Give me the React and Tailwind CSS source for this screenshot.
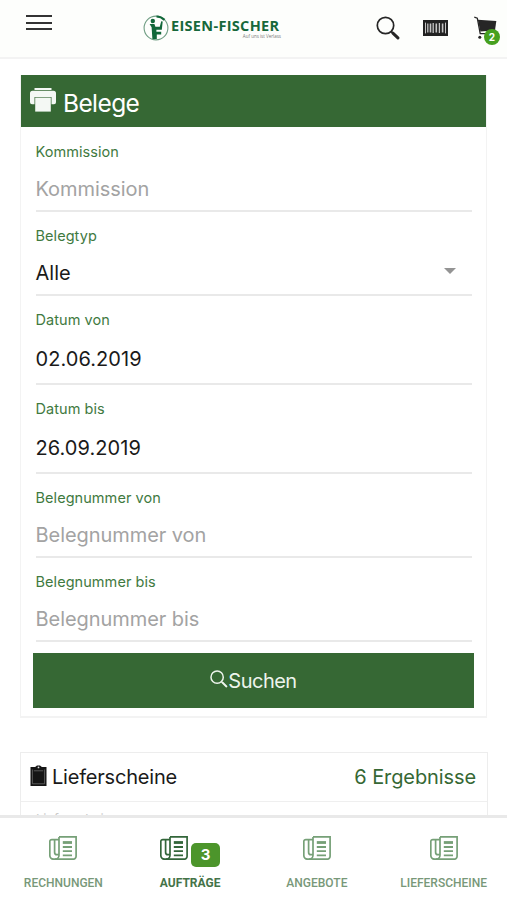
import clsx from 'clsx';

const fields = [
  { label: 'Kommission', placeholder: 'Kommission' },
  { label: 'Belegtyp', value: 'Alle', select: true },
  { label: 'Datum von', value: '02.06.2019', date: true },
  { label: 'Datum bis', value: '26.09.2019', date: true },
  { label: 'Belegnummer von', placeholder: 'Belegnummer von' },
  { label: 'Belegnummer bis', placeholder: 'Belegnummer bis' },
];

const tabs = [
  { label: 'RECHNUNGEN' },
  { label: 'AUFTRÄGE', badge: 3, active: true },
  { label: 'ANGEBOTE' },
  { label: 'LIEFERSCHEINE' },
];

const SearchIcon = ({ className, strokeWidth = 2, handle = 3 }) => (
  <svg viewBox="0 0 24 24" className={className} fill="none" stroke="currentColor" strokeWidth={strokeWidth}>
    <circle cx="9.5" cy="9.5" r="8.2" />
    <path d="M15.3 15.6l1.8 1.7" />
    <path d="M16.9 17.1l5 4.8" strokeWidth={handle} strokeLinecap="round" />
  </svg>
);

const BarcodeIcon = () => (
  <svg viewBox="0 0 25 16" className="h-4 w-[25px]">
    <path fill="#222" d="M0 0h25v16H0z" />
    <g fill="none" stroke="#c4c4c4" strokeWidth="1">
      <path d="M2.5 2.6v10.8M22.5 2.6v10.8" />
      <path d="M4.8 3.5v9M10.200 3v10M16.400 3v10" strokeWidth="1.300" />
      <path d="M7.500 3.500v9M13.300 3.500v9M19.600 3.500v9" strokeWidth="1.600" />
    </g>
  </svg>
);

const CartIcon = () => (
  <svg viewBox="0 0 24 24" className="h-6 w-6" fill="none" stroke="#262626">
    <path d="M.3 1.200l3 1 2.900 15.400h12" strokeWidth="1.300" />
    <path d="M3.800 3.700L22.300 5l-1.300 9.200-14.600 1.400z" fill="#262626" stroke="none" />
    <circle cx="5.800" cy="21.300" r="1.500" fill="#262626" stroke="none" />
  </svg>
);

const PaperIcon = () => (
  <svg viewBox="0 0 28 24" className="h-6 w-7" fill="none" stroke="currentColor" strokeWidth="1.700">
    <path d="M10 .9h17.100v19.300a3 3 0 0 1-3 3H4.700a3.900 3.900 0 0 1-3.900-3.900V5.600a2 2 0 0 1 2-2H10" />
    <path d="M10 .9v18.300a4 4 0 0 1-4 4" />
    <path d="M5.600 3.600v12.600c0 1.600 1 2.500 2.300 2.500H10" />
    <path d="M13.800 6.500h9.200" strokeWidth="2.800" />
    <path d="M13.800 11h9.200M13.800 15.200h9.200M13.800 19.300h9.200" strokeWidth="1.800" />
  </svg>
);

const Logo = () => (
  <div className="flex items-start">
    <svg viewBox="0 0 26 26" className="h-[26px] w-[26px]">
      <circle cx="13" cy="13" r="11.900" fill="none" stroke="#6f9d83" strokeWidth="1.100" />
      <path d="M13.500 1.500a11.900 11.900 0 0 1 8 3.400" fill="none" stroke="#12683a" strokeWidth="2.200" />
      <circle cx="9.800" cy="6" r="2.200" fill="#12683a" />
      <path
        d="M6.600 9h4.800l1 2.800h4.400l1.400-5.600 1.500.3-.9 8.300h-5.400v2h4.800v2.600h-4.400V24H9.400l-.8-11.800z"
        fill="#12683a"
      />
    </svg>
    <div className="ml-[2px] mt-[4px] flex w-[110px] flex-col items-end">
      <span className="w-full whitespace-nowrap font-['Open_Sans',sans-serif] text-[14.500px] font-bold leading-[14px] tracking-[0.320px] text-[#17683b]">
        EISEN-FISCHER
      </span>
      <span className="mt-px whitespace-nowrap font-['Open_Sans',sans-serif] text-[4.500px] leading-[5px] text-[#777]">
        Auf uns ist Verlass
      </span>
    </div>
  </div>
);

const Header = () => (
  <header className="flex h-[59px] shrink-0 items-start border-b-2 border-[#f3f3f3] bg-[#fdfefc]">
    <div className="ml-[26px] mt-[15px] flex w-[26px] flex-col gap-[4.500px]">
      <span className="h-[2px] bg-[#333]" />
      <span className="h-[2px] bg-[#333]" />
      <span className="h-[2px] bg-[#333]" />
    </div>
    <div className="ml-[91px] mt-[15px]">
      <Logo />
    </div>
    <div className="ml-auto flex items-start pr-[9px] text-[#262626]">
      <SearchIcon className="mt-[16px] h-6 w-6" strokeWidth={1.700} handle={3} />
      <div className="ml-[23px] mt-[20px]">
        <BarcodeIcon />
      </div>
      <div className="relative ml-[26px] mt-[16px]">
        <CartIcon />
        <span className="absolute left-[10px] top-[13px] flex h-4 w-4 items-center justify-center rounded-full bg-[#46a01f] text-[10px] font-bold text-white">
          2
        </span>
      </div>
    </div>
  </header>
);

const Field = ({ label, placeholder, value, select, date }) => (
  <div className={clsx('ml-[14.500px] mr-[14px] flex flex-col border-b-2 border-[#e9e9e9]', date ? 'h-[89px]' : 'h-[84px]')}>
    <label className="mt-[14px] text-[14.500px] leading-[20px] tracking-[0.060px] text-[#3f7a3f]">{label}</label>
    <div className={clsx('flex items-center justify-between leading-[28px]', date ? 'mt-[15px]' : 'mt-[13px]')}>
      <span
        className={clsx(
          'text-[20px]',
          value ? 'text-[#1a1a1a]' : 'tracking-[-0.060px] text-[#a3a3a3]',
          date && 'tracking-[0.060px]'
        )}
      >
        {value || placeholder}
      </span>
      {select && (
        <svg viewBox="0 0 12 6" className="mb-[5px] mr-[16px] h-1.5 w-3">
          <path d="M0 0h12L6 6z" fill="#949494" />
        </svg>
      )}
    </div>
  </div>
);

const SearchCard = () => (
  <section className="mx-5 mt-4 border-x border-b-2 border-[#f3f3f3]">
    <div className="mb-px flex h-[52px] items-center bg-[#366834] text-white">
      <svg viewBox="0 0 26 24" className="mb-[3px] ml-[9px] h-6 w-[26px]">
        <path d="M4.500 0h17v2h-17z" fill="#f4f8f4" />
        <path
          d="M2.500 2.800h21a2.500 2.500 0 0 1 2.500 2.500v9a2 2 0 0 1-2 2h-2.500V9h-17v7.300H2a2 2 0 0 1-2-2v-9a2.500 2.500 0 0 1 2.500-2.500z"
          fill="#f4f8f4"
        />
        <path d="M5.200 9.600h15.600v14H5.200z" fill="#f4f8f4" />
      </svg>
      <h1 className="ml-[7px] mt-[4px] text-[24.500px] font-normal tracking-[-0.600px]">Belege</h1>
    </div>
    {fields.map((field) => (
      <Field key={field.label} {...field} />
    ))}
    <button className="mx-3 mb-2 mt-[11px] flex h-[55px] w-[441px] items-center justify-center bg-[#366834] text-[20px] tracking-[-0.500px] text-[#edf4ec]">
      <SearchIcon className="mb-[3px] h-[18px] w-[18px]" strokeWidth={2} handle={2.600} />
      <span>Suchen</span>
    </button>
  </section>
);

const ResultCard = () => (
  <section className="ml-5 mr-[19px] mt-[34px] h-[90px] border border-[#ededed]">
    <div className="flex h-[49px] items-center border-b border-[#efefef] pl-[9px] pr-[11px]">
      <svg viewBox="0 0 17 21" className="mb-[3px] h-[21px] w-[17px]">
        <path d="M.5 2h16v19H.5z" fill="#151515" />
        <path d="M4.500 2.500L7 .5h3l2.500 2v2.600h-8z" fill="#151515" />
        <path d="M2.400 4.500v14.300h12.200V4.500M3.800 5.800h9.400" fill="none" stroke="#777" strokeWidth=".7" />
        <circle cx="8.500" cy="2.400" r=".9" fill="#ddd" />
      </svg>
      <h2 className="ml-[5px] text-[20px] tracking-[-0.200px] text-[#1a1a1a]">Lieferscheine</h2>
      <span className="ml-auto text-[20px] tracking-[-0.100px] text-[#366834]">6 Ergebnisse</span>
    </div>
    <p className="ml-[15px] mt-[7px] text-[13px] leading-[20px] text-[#c9c9c9]">Lieferschein</p>
  </section>
);

const TabBar = () => (
  <nav className="flex h-[85px] shrink-0 border-t-[3px] border-[#e9e9e9] bg-white">
    {tabs.map((tab) => (
      <div
        key={tab.label}
        className={clsx('flex flex-1 flex-col items-center', tab.active ? 'text-[#33663a]' : 'text-[#76a077]')}
      >
        <div className="mt-[18px] flex h-[31px] items-start gap-[3px]">
          <PaperIcon />
          {tab.badge && (
            <span className="mt-[7px] flex h-6 w-[29px] items-center justify-center rounded-[5px] bg-[#4c952b] text-[15px] font-bold text-white">
              {tab.badge}
            </span>
          )}
        </div>
        <span
          className={clsx(
            "mt-[8px] font-['Roboto',sans-serif] text-[12px] leading-[16px]",
            tab.active ? 'font-bold text-[#447348]' : 'font-medium text-[#789879]'
          )}
        >
          {tab.label}
        </span>
      </div>
    ))}
  </nav>
);

export default function App() {
  return (
    <div className="flex h-[900px] w-[507px] flex-col overflow-hidden bg-white font-['Inter',sans-serif]">
      <Header />
      <main className="min-h-0 flex-1 overflow-hidden">
        <SearchCard />
        <ResultCard />
      </main>
      <TabBar />
    </div>
  );
}
